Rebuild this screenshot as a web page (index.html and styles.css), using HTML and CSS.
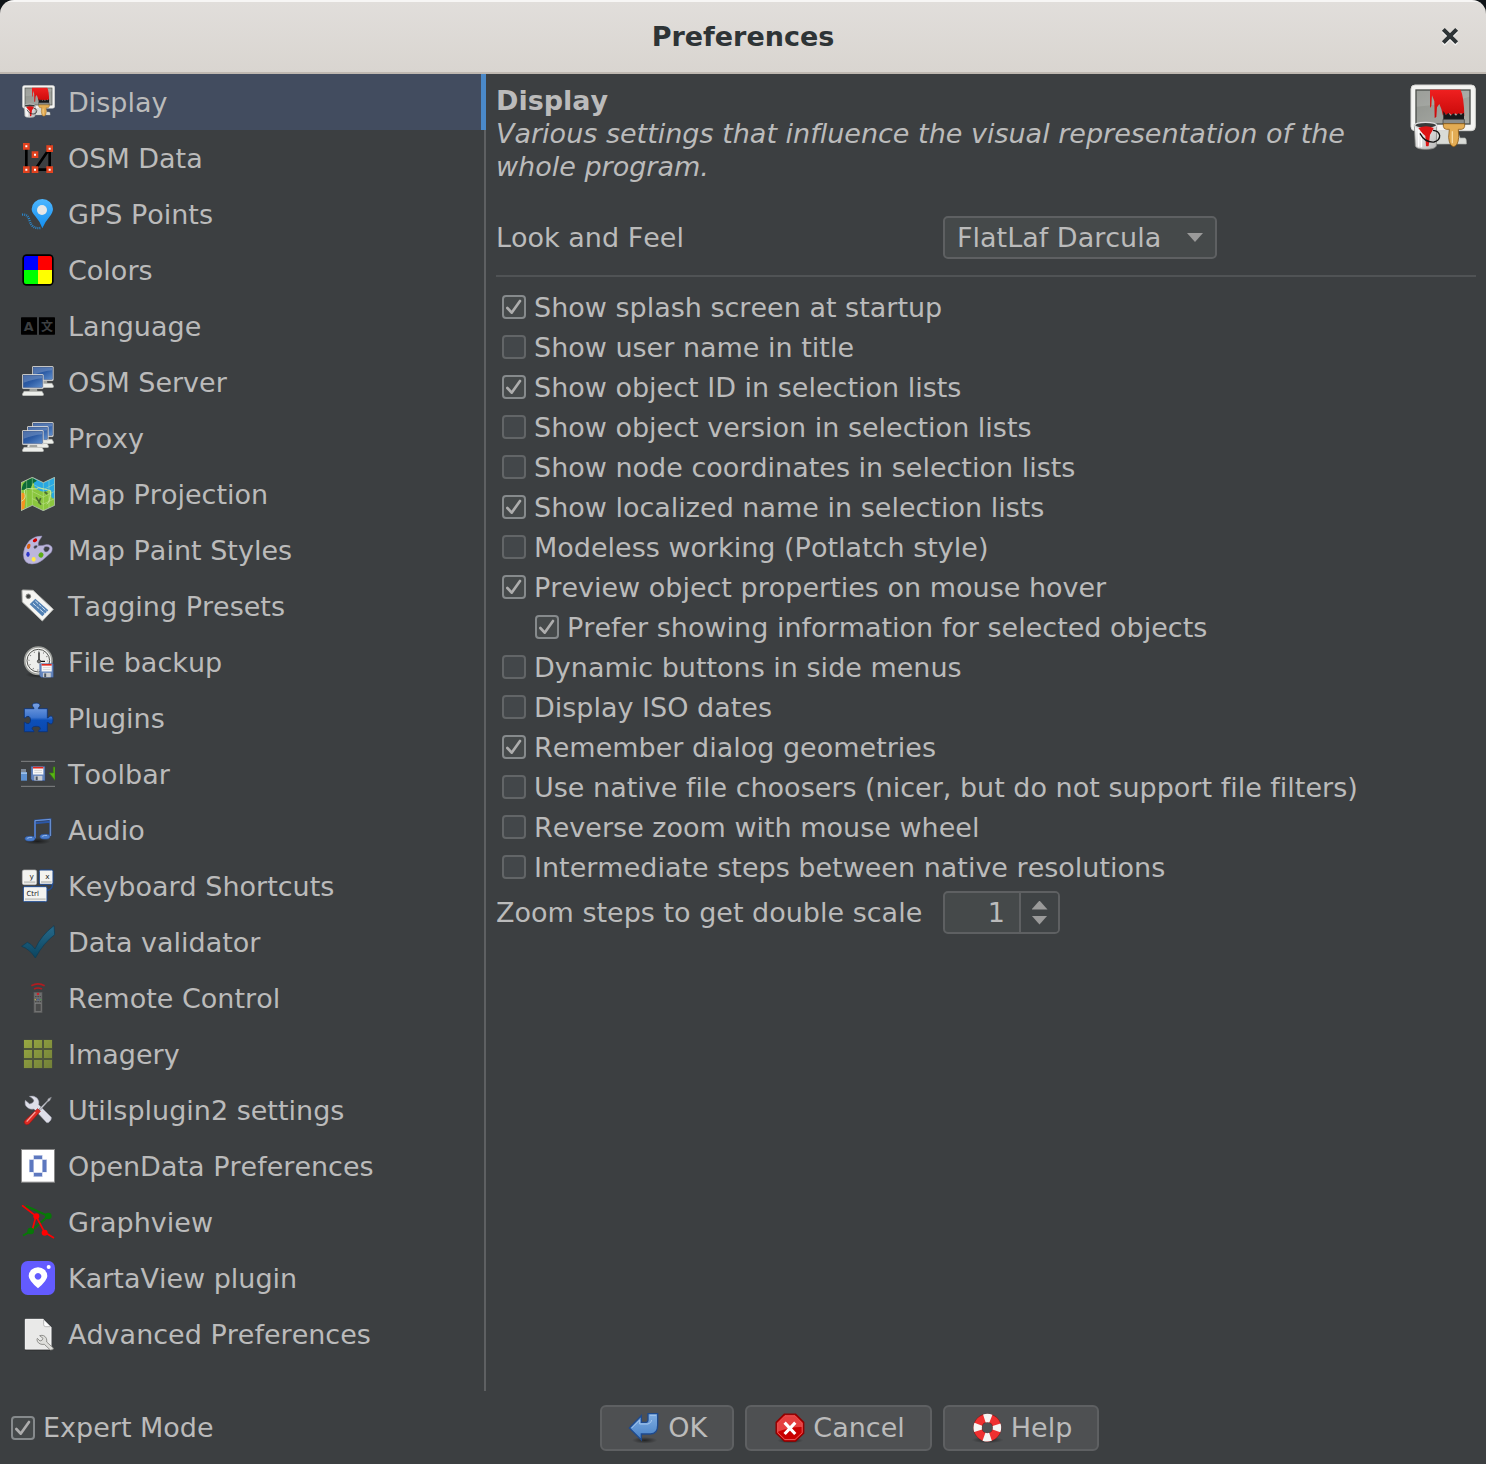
FILE: index.html
```html
<!DOCTYPE html>
<html lang="en">
<head>
<meta charset="utf-8">
<title>Preferences</title>
<link rel="stylesheet" href="styles.css">
</head>
<body>
<svg class="defs" aria-hidden="true">
  <defs>
    <linearGradient id="gScreen" x1="0" y1="0" x2="1" y2="1"><stop offset="0" stop-color="#8e918c"/><stop offset="1" stop-color="#a9aca6"/></linearGradient>
    <linearGradient id="gRed" x1="0" y1="0" x2="0" y2="1"><stop offset="0" stop-color="#ef2020"/><stop offset="1" stop-color="#c80808"/></linearGradient>
    <linearGradient id="gPin" x1="0" y1="0" x2="0" y2="1"><stop offset="0" stop-color="#4db6ff"/><stop offset="1" stop-color="#138ff0"/></linearGradient>
    <linearGradient id="gBlue" x1="0" y1="0" x2="1" y2="1"><stop offset="0" stop-color="#1f4a92"/><stop offset=".5" stop-color="#2d5ca5"/><stop offset="1" stop-color="#5d8dcb"/></linearGradient>
    <linearGradient id="gPuzzle" x1="0" y1="0" x2="0" y2="1"><stop offset="0" stop-color="#7ba2e2"/><stop offset=".5" stop-color="#3c74cd"/><stop offset=".6" stop-color="#0c4fb8"/><stop offset="1" stop-color="#0a49b0"/></linearGradient>
    <linearGradient id="gTick" x1="0" y1="0" x2="0" y2="1"><stop offset="0" stop-color="#27698a"/><stop offset="1" stop-color="#0b4560"/></linearGradient>
    <linearGradient id="gTile" x1="0" y1="0" x2="1" y2="1"><stop offset="0" stop-color="#99a942"/><stop offset="1" stop-color="#717f38"/></linearGradient>
    <linearGradient id="gSteel" x1="0" y1="0" x2="1" y2="1"><stop offset="0" stop-color="#fafafa"/><stop offset="1" stop-color="#b9b9b9"/></linearGradient>
    <linearGradient id="gArrow" x1="0" y1="0" x2="0" y2="1"><stop offset="0" stop-color="#80aee2"/><stop offset="1" stop-color="#4680c6"/></linearGradient>
    <radialGradient id="gShadow"><stop offset="0" stop-color="#000" stop-opacity=".55"/><stop offset="1" stop-color="#000" stop-opacity="0"/></radialGradient>
    <symbol id="icon-display" viewBox="60 252 198 198">
      <ellipse cx="190" cy="424" rx="50" ry="14" fill="url(#gShadow)"/>
      <path d="M140 388h60l10 26h14q6 0 5 18h-90z" fill="#d9dbd7" stroke="#aeb0ac" stroke-width="2"/>
      <rect x="63" y="255" width="193" height="137" rx="12" fill="#f4f4f2" stroke="#d5d5d2" stroke-width="3"/>
      <rect x="78" y="270" width="162" height="102" fill="url(#gScreen)" stroke="#4c4f4b" stroke-width="4"/>
      <path d="M80 320q90-6 158-30v-18H80z" fill="#fff" opacity=".12"/>
      <path d="M120 269h92q10 22 11 80l-10-10-8 8-8-7-9 7-9-7-9 7-6-7-5 7-5-20-6-15-7 10-2 29-5 3-1-50-7-18-2 32-4 6z" fill="url(#gRed)"/>
      <path d="M160 333l8 12 7-6 7 8 8-7 8 7 7-7 8 4 9-6v22h-62z" fill="#17181a"/>
      <path d="M159 358h64v14h-64z" fill="#8a8c8a" stroke="#3a3a3a" stroke-width="2"/>
      <path d="M160 371h64v8q-1 8-9 9h-10l1 24q-2 26-15 28-13-2-15-28l2-24h-9q-8-1-9-9z" fill="#e3ac54" stroke="#8b5a14" stroke-width="2.5"/>
      <path d="M187 394v36" stroke="#f8dca4" stroke-width="4"/>
      <path d="M73 374l3 64q4 10 31 10t32-10l1-64z" fill="url(#gSteel)" stroke="#8d8f8c" stroke-width="2.5"/>
      <path d="M86 390v50M94 396v46" stroke="#fff" stroke-width="5"/>
      <ellipse cx="107" cy="376" rx="33" ry="9" fill="#393b3a" stroke="#ddd" stroke-width="4"/>
      <path d="M85 384q24-10 46 0-4 10-11 20l-4 34q-4 2-8 0l-2-30q-10-8-21-24z" fill="#dd1515"/>
      <path d="M90 400q14 28 42 26 18-4 17-20-3-14-20-15" fill="none" stroke="#151515" stroke-width="4"/>
    </symbol>
    <symbol id="pc" viewBox="0 0 66 66">
      <path d="M23 44h22l1 8H22z" fill="#9fa19d"/>
      <path d="M6 52h54l5 9q0 4-4 4H4q-4-1-3-4z" fill="#eceeea" stroke="#b0b2ae" stroke-width="2"/>
      <rect x="1" y="1" width="63" height="43" rx="3" fill="#f3f3f1" stroke="#c4c5c3" stroke-width="1.5"/>
      <rect x="4" y="4" width="57" height="36" fill="url(#gBlue)" stroke="#1d3f7c" stroke-width="1.5"/>
      <path d="M5 5h55v8q-24 2-55 13z" fill="#fff" opacity=".2"/>
    </symbol>
    <symbol id="floppy" viewBox="0 0 44 44">
      <path d="M1 1h42v42H5l-4-5z" fill="#6485bd" stroke="#3b5b97" stroke-width="2"/>
      <rect x="7" y="2" width="31" height="23" fill="#f7f7f7"/><rect x="7" y="2" width="31" height="5" fill="#e1261c"/>
      <path d="M11 13h23M11 19h23" stroke="#ccc" stroke-width="2"/>
      <rect x="11" y="29" width="24" height="14" fill="#c9ccd0"/><rect x="15" y="31" width="6" height="11" fill="#4a5563"/>
    </symbol>
  </defs>
</svg>
<div class="window">
  <header class="titlebar">
    <h1 class="titlebar-text">Preferences</h1>
    <button class="close" type="button" aria-label="Close"><svg viewBox="0 0 48 48"><path d="M4 9l40 40M44 9L4 49" stroke="#fff" stroke-width="11" opacity=".7"/><path d="M4 4l40 40M44 4L4 44" stroke="#2e3436" stroke-width="12"/></svg></button>
  </header>
  <div class="main">
    <nav class="sidebar" aria-label="Categories">
      <button type="button" class="tab selected"><svg class="icon" viewBox="0 0 34 34"><use href="#icon-display" x="1" y="0" width="33" height="33"/></svg>Display</button>
      <button type="button" class="tab"><svg class="icon" viewBox="63 213 102 102"><path d="M79 230v69M105 299h44v-64L105 299" fill="none" stroke="#000" stroke-width="8"/><g fill="#fff" stroke="#e2421f" stroke-width="7"><path d="M72.500 222.500h13v13h-13zM142.500 229.500h13v13h-13zM98.500 247.500h13v13h-13zM72.500 292.500h13v13h-13zM98.500 292.500h13v13h-13zM142.500 292.500h13v13h-13z"/></g></svg>OSM Data</button>
      <button type="button" class="tab"><svg class="icon" viewBox="63 381 102 102"><path d="M66 434q17-2 22 16t17 23q8 2 16 1" fill="none" stroke="#2b86c9" stroke-width="7" stroke-dasharray="3 3"/><path d="M127 475q-8-22-21-36-11-12-11-22a32 30 0 0 1 64 0q0 11-11 24-12 13-21 34z" fill="url(#gPin)"/><circle cx="126" cy="420" r="15" fill="#e6e6e6"/></svg>GPS Points</button>
      <button type="button" class="tab"><svg class="icon" viewBox="63 549 102 102"><rect x="67" y="553" width="94" height="94" rx="13" fill="#000"/><path d="M72 600v-36q0-6 6-6h36v42z" fill="#00f"/><path d="M114 558h36q6 0 6 6v36h-42z" fill="red"/><path d="M72 600h42v42H78q-6 0-6-6z" fill="#0f0"/><path d="M114 600h42v36q0 6-6 6h-36z" fill="#ff0"/></svg>Colors</button>
      <button type="button" class="tab"><svg class="icon" viewBox="63 27 102 102" aria-hidden="true"><path d="M65 52h46v52H65q-2 0-2-2V54q0-2 2-2zM117 52h46q2 0 2 2v48q0 2-2 2h-46z" fill="#000"/><text class="glyph" x="86" y="93" font-size="38" font-weight="700" fill="#3c3f41">A</text><text class="glyph cjk" x="141" y="92" font-size="36" font-weight="700" fill="#3c3f41">文</text></svg>Language</button>
      <button type="button" class="tab"><svg class="icon" viewBox="63 195 102 102"><use href="#pc" x="96" y="198" width="66" height="66"/><use href="#pc" x="66" y="222" width="66" height="66"/></svg>OSM Server</button>
      <button type="button" class="tab"><svg class="icon" viewBox="63 363 102 102"><use href="#pc" x="96" y="366" width="66" height="66"/><use href="#pc" x="81" y="378" width="66" height="66"/><use href="#pc" x="66" y="390" width="66" height="66"/></svg>Proxy</button>
      <button type="button" class="tab"><svg class="icon" viewBox="63 531 102 102"><path d="M63 548l34-16 33 16 34-16v84l-34 16-33-16-34 16z" fill="#8ac63e"/><path d="M100 534l30 14 34-16v64q-12-2-10-12 4-12-8-13-10 6-24 2-22-8-20-20z" fill="#29a8e2"/><path d="M64 570q4-24 20-31l13-6 14 9-12 8-9 18z" fill="#0b6a38"/><path d="M63 578l12 2 1 22-3 24-10 5z" fill="#f7931e"/><path d="M97 552l33 17 34-17M97 574l33 17 34-17M97 596l33 16 34-16M80 541v82M97 532v84M130 549v83M147 541v83" fill="none" stroke="#d8efb5" stroke-width="1.500" opacity=".75"/><path d="M64 604q16-8 10-24t18-14 20-2 40 8q0 34-12 40" fill="none" stroke="#c8e89c" stroke-width="3"/><path d="M108 592l15 22M122 594l-6 16M134 576l8 6" stroke="#4c6b33" stroke-width="5"/><path d="M63 548l34-16 33 16 34-16v84l-34 16-33-16-34 16z" fill="none" stroke="#b9c4bb" stroke-width="2.500"/></svg>Map Projection</button>
      <button type="button" class="tab"><svg class="icon" viewBox="63 39 102 102"><path fill-rule="evenodd" d="M126 48q-22-1-38 14-18 20-18 42 1 27 26 28 17 0 32-12 14-12 26-23 6-14-1-19-6-5-16-4-10 4-22 3-2-8 3-16 5-6 8-13zM134 80q14-2 15 5-3 12-13 11-9-6-2-16zM104 77q9-3 8 3-2 4-8 6-6-5 0-9z" fill="#bcb6dc" stroke="#8e88b4" stroke-width="1.500"/><g><ellipse cx="105" cy="61" rx="7" ry="5" transform="rotate(-30 105 61)" fill="#cc0000"/><ellipse cx="86" cy="79" rx="5" ry="8" transform="rotate(20 86 79)" fill="#d86010"/><ellipse cx="84" cy="103" rx="5" ry="8" fill="#2b35c8"/><ellipse cx="101" cy="118" rx="6" ry="7" fill="#ffe94a"/><ellipse cx="123" cy="105" rx="7" ry="8" transform="rotate(30 123 105)" fill="#5cab16"/></g></svg>Map Paint Styles</button>
      <button type="button" class="tab"><svg class="icon" viewBox="63 207 102 102"><path d="M66 212q0-2 3-2l30 1 61 57-33 35-60-57z" fill="#f5f5f2" stroke="#b4b5b1" stroke-width="3"/><circle cx="85" cy="229" r="7" fill="#3d3f3e" stroke="#8a8b88" stroke-width="3"/><path d="M106 236l39 35-18 18-38-36z" fill="#5281b4"/><path d="M106 243l34 31M99 250l36 31" stroke="#d9e8f4" stroke-width="3" stroke-dasharray="11 3"/></svg>Tagging Presets</button>
      <button type="button" class="tab"><svg class="icon" viewBox="63 375 102 102"><ellipse cx="116" cy="464" rx="40" ry="10" fill="url(#gShadow)"/><circle cx="115" cy="422" r="41" fill="#f2f2f0" stroke="#9c9e9a" stroke-width="5"/><circle cx="115" cy="422" r="34" fill="#eeeeec" stroke="#555753" stroke-width="3"/><circle cx="115" cy="422" r="28" fill="none" stroke="#555" stroke-width="4" stroke-dasharray="2 12.660"/><path d="M117 397v27h18" fill="none" stroke="#111" stroke-width="4"/><circle cx="117" cy="424" r="5" fill="#777" stroke="#333" stroke-width="2"/><use href="#floppy" x="118" y="430" width="43" height="43"/></svg>File backup</button>
      <button type="button" class="tab"><svg class="icon" viewBox="63 543 102 102"><path d="M73 566h29C102 562 97 560 97 556C97 547 120 547 120 556C120 560 115 562 115 566H142V594C146 594 148 588 153 588C161 588 161 612 153 612C148 612 146 607 142 607V635H116C114 631 121 630 121 625C121 617 96 617 96 625C96 630 103 631 102 635H73V607C77 606 78 611 84 611C94 611 94 589 84 589C78 589 77 595 73 594Z" fill="url(#gPuzzle)" stroke="#0b3278" stroke-width="2.500"/></svg>Plugins</button>
      <button type="button" class="tab"><svg class="icon" viewBox="63 36 102 102"><path d="M63 49h102M63 124h102" stroke="#818484" stroke-width="3"/><path d="M63 72h15v12H63z" fill="#7c8795"/><path d="M63 82h18v25H63z" fill="#5e92d2"/><path d="M63 82h18v5H63z" fill="#9cc1ea"/><use href="#floppy" x="92" y="63" width="44" height="45"/><path d="M165 66h-5v18h-12l17 22z" fill="#59b414" stroke="#38850a" stroke-width="2"/></svg>Toolbar</button>
      <button type="button" class="tab"><svg class="icon" viewBox="63 204 102 102"><ellipse cx="112" cy="289" rx="40" ry="10" fill="url(#gShadow)"/><path d="M105 280v-53l46-4v50M105 235l45-5" fill="none" stroke="#2b57a8" stroke-width="6"/><path d="M105 280v-53l46-4v50" fill="none" stroke="#7fa5e0" stroke-width="2.500"/><g fill="#4a7cc9" stroke="#2b57a8" stroke-width="2"><ellipse cx="90" cy="281" rx="15" ry="7"/><ellipse cx="135" cy="275" rx="15" ry="7"/></g><path d="M82 280q6-4 14-3M127 274q6-4 14-3" stroke="#9fc0ee" stroke-width="3" fill="none"/></svg>Audio</button>
      <button type="button" class="tab"><svg class="icon" viewBox="63 372 102 102" aria-hidden="true"><path d="M158 416q0 20-22 20" fill="none" stroke="#1f4b92" stroke-width="4"/><g fill="#f3f3f0"><rect x="67" y="375" width="43" height="44" rx="5" stroke="#bbb" stroke-width="2"/><rect x="118" y="375" width="41" height="43" rx="4" stroke="#1f4b92" stroke-width="3"/><rect x="70" y="425" width="71" height="45" rx="4" stroke="#1f4b92" stroke-width="3"/></g><path d="M72 412h34M123 411h32M75 463h62" stroke="#c9cac6" stroke-width="6"/><g fill="#222"><text class="glyph" x="95" y="401" font-size="22">y</text><text class="glyph" x="142" y="403" font-size="22">x</text><text class="glyph" x="98" y="454" font-size="21">Ctrl</text></g></svg>Keyboard Shortcuts</button>
      <button type="button" class="tab"><svg class="icon" viewBox="63 540 102 102"><path d="M65 604l17-12q12 4 23 20 19-42 57-70l2 27q-33 24-58 70-16-26-41-35z" fill="url(#gTick)" stroke="#0a3b54" stroke-width="2"/></svg>Data validator</button>
      <button type="button" class="tab"><svg class="icon" viewBox="63 33 102 102"><path d="M94 47q20-11 40 0M102 57q12-6 24 0" fill="none" stroke="#b01c20" stroke-width="5"/><rect x="102" y="67" width="24" height="61" fill="#6e6f6f" stroke="#5a5b5b" stroke-width="2"/><rect x="106" y="101" width="17" height="23" fill="#494a4a" stroke="#909090" stroke-width="1"/><path d="M105 80h18M105 88h18M105 95h18" stroke="#444" stroke-width="3" stroke-dasharray="5 2"/><circle cx="114" cy="72" r="4" fill="#c8232c"/><path d="M104 89h4" stroke="#c9b83a" stroke-width="3"/><path d="M112 89h4" stroke="#3f72d1" stroke-width="3"/><path d="M120 89h4" stroke="#4ba34d" stroke-width="3"/></svg>Remote Control</button>
      <button type="button" class="tab"><svg class="icon" viewBox="63 201 102 102"><path d="M71 209h86v86H71z" fill="#4e553b"/><path d="M72 210h24v24H72zM102 210h24v24h-24zM132 210h24v24h-24zM72 240h24v24H72zM102 240h24v24h-24zM132 240h24v24h-24zM72 270h24v24H72zM102 270h24v24h-24zM132 270h24v24h-24z" fill="url(#gTile)"/></svg>Imagery</button>
      <button type="button" class="tab"><svg class="icon" viewBox="63 369 102 102"><path d="M88 379q13-4 23 5 8 9 5 20l38 38q2 8-9 16-5 2-9-4l-34-37q-18 3-26-12-2-9 0-14l13 11q10-2 13-9 0-6-14-14z" fill="#dddee8" stroke="#9a9bab" stroke-width="1.500"/><path d="M117 417l25-25 3-6 9-4-5 10-6 3-22 26z" fill="#c6c8d0" stroke="#85878d" stroke-width="2"/><path d="M113 416l8 8-34 38q-9 6-14-3-2-5 4-10z" fill="#dd2c25" stroke="#a60f0c" stroke-width="2"/><path d="M80 455l26-29" stroke="#f6a29c" stroke-width="4"/></svg>Utilsplugin2 settings</button>
      <button type="button" class="tab"><svg class="icon" viewBox="63 537 102 102"><rect x="64.500" y="538.500" width="99" height="98" fill="#fff" stroke="#888" stroke-width="3"/><path d="M100 555h28v13h13v39h-13v14h-28v-14H87v-39h13z" fill="#c3cde9"/><path d="M102 557h24v10h-24zM89 570h11v36H89zM128 570h11v36h-11zM102 609h24v10h-24z" fill="#5d78bf"/><path d="M102 569h24v38h-24z" fill="#fff"/></svg>OpenData Preferences</button>
      <button type="button" class="tab"><svg class="icon" viewBox="63 45 102 102"><path d="M78 48l67 30-52 45-24 14" fill="none" stroke="#087808" stroke-width="6"/><path d="M66 46l42 32 26 49 28 17M108 78l-12 45" fill="none" stroke="#f00" stroke-width="5"/><g fill="#f00"><circle cx="109" cy="79" r="9"/><circle cx="134" cy="128" r="9"/></g><g fill="#087808"><circle cx="145" cy="78" r="10"/><circle cx="92" cy="123" r="10"/></g></svg>Graphview</button>
      <button type="button" class="tab"><svg class="icon" viewBox="63 213 102 102"><rect x="63" y="213" width="102" height="102" rx="20" fill="#635bff"/><path fill-rule="evenodd" d="M114 295q-28-24-28-37a28 26 0 0 1 56 0q0 13-28 37zM114 249a10 10 0 1 0 .1 0z" fill="#fff"/><circle cx="146" cy="231" r="6" fill="#fff"/></svg>KartaView plugin</button>
      <button type="button" class="tab"><svg class="icon" viewBox="63 381 102 102"><path d="M76 388h54l23 23v67H76z" fill="#e9e9e8" stroke="#fafafa" stroke-width="3"/><path d="M75 480h78" stroke="#222" stroke-width="2"/><path d="M131 389l21 21h-15q-6 0-6-6z" fill="#fdfdfd" stroke="#9c9c9c" stroke-width="2"/><path d="M119 437q14-4 20 8 2 5 1 11l20 18q2 6-9 6l-18-17q-15 2-21-9-2-6 0-9l8 8q7 0 9-8z" fill="#dededb" stroke="#7f807c" stroke-width="2.500"/></svg>Advanced Preferences</button>
    </nav>
    <main class="content">
      <section class="intro">
        <div class="intro-text"><h2>Display</h2><p>Various settings that influence the visual representation of the whole program.</p></div>
        <svg class="intro-icon"><use href="#icon-display"/></svg>
      </section>
      <form class="form">
        <label for="laf">Look and Feel</label>
        <span class="select"><select id="laf"><option>FlatLaf Darcula</option></select></span>
        <hr>
        <div class="checks">
          <label class="check"><input type="checkbox" checked>Show splash screen at startup</label>
          <label class="check"><input type="checkbox">Show user name in title</label>
          <label class="check"><input type="checkbox" checked>Show object ID in selection lists</label>
          <label class="check"><input type="checkbox">Show object version in selection lists</label>
          <label class="check"><input type="checkbox">Show node coordinates in selection lists</label>
          <label class="check"><input type="checkbox" checked>Show localized name in selection lists</label>
          <label class="check"><input type="checkbox">Modeless working (Potlatch style)</label>
          <label class="check"><input type="checkbox" checked>Preview object properties on mouse hover</label>
          <label class="check nested"><input type="checkbox" checked>Prefer showing information for selected objects</label>
          <label class="check"><input type="checkbox">Dynamic buttons in side menus</label>
          <label class="check"><input type="checkbox">Display ISO dates</label>
          <label class="check"><input type="checkbox" checked>Remember dialog geometries</label>
          <label class="check"><input type="checkbox">Use native file choosers (nicer, but do not support file filters)</label>
          <label class="check"><input type="checkbox">Reverse zoom with mouse wheel</label>
          <label class="check"><input type="checkbox">Intermediate steps between native resolutions</label>
        </div>
        <label for="steps">Zoom steps to get double scale</label>
        <span class="spinner"><input id="steps" type="text" inputmode="numeric" value="1"><span class="arrows"><button type="button" class="up" aria-label="Increase"></button><button type="button" class="down" aria-label="Decrease"></button></span></span>
      </form>
    </main>
  </div>
  <footer class="footer">
    <label class="check"><input type="checkbox" checked>Expert Mode</label>
    <div class="actions">
      <button type="button" class="action"><svg viewBox="0 0 96 96"><ellipse cx="50" cy="85" rx="38" ry="10" fill="url(#gShadow)"/><path d="M4 48l36-37v20h14q6-1 6-8V5h29v35q0 26-22 26H40v18z" fill="url(#gArrow)" stroke="#1f4a8c" stroke-width="4"/><path d="M11 48l24-24v12h25q11-4 11-12M66 10h18" fill="none" stroke="#a4c6ee" stroke-width="3"/></svg>OK</button>
      <button type="button" class="action"><svg viewBox="-5 -3 102 102"><ellipse cx="50" cy="88" rx="42" ry="9" fill="url(#gShadow)"/><path d="M31 4h36l26 26v35L67 90H31L5 65V30z" fill="#c90000" stroke="#8c0000" stroke-width="4"/><path d="M33 10h32l23 23v12Q50 44 10 60V33z" fill="#f05a5a" opacity=".7"/><path d="M33 9h32l23 23v31L65 85H33L10 63V32z" fill="none" stroke="#ea6060" stroke-width="3"/><path d="M32 31l34 36M66 31L32 67" stroke="#fff" stroke-width="10"/></svg>Cancel</button>
      <button type="button" class="action"><svg viewBox="0 0 96 96"><ellipse cx="50" cy="84" rx="48" ry="10" fill="url(#gShadow)"/><circle cx="49" cy="47" r="29" fill="none" stroke="#8f1414" stroke-width="26"/><circle cx="49" cy="47" r="29" fill="none" stroke="#ef3030" stroke-width="23"/><circle cx="49" cy="47" r="29" fill="none" stroke="#f5f5f3" stroke-width="25" stroke-dasharray="20 25.550" stroke-dashoffset="10"/></svg>Help</button>
    </div>
  </footer>
</div>
</body>
</html>
```
FILE: styles.css
```css
* { box-sizing: border-box; }

:root {
  --bg: #3c3f41;
  --fg: #bbbbbb;
  --field: #45494a;
  --line: #5e6062;
}

body {
  margin: 0;
  background: #101418;
  color: var(--fg);
  font: 27px/33px "DejaVu Sans", sans-serif;
  font-kerning: none;
  font-variant-ligatures: none;
}

button, input, select {
  font: inherit;
  font-kerning: inherit;
  font-variant-ligatures: inherit;
  color: inherit;
}
h1, h2, p { margin: 0; font-size: inherit; }

.defs { position: absolute; width: 0; height: 0; }

.window {
  min-height: 100vh;
  display: flex;
  flex-direction: column;
  background: var(--bg);
  border-radius: 14px 14px 0 0;
  overflow: hidden;
}

.titlebar {
  display: grid;
  grid-template-columns: 1fr auto 1fr;
  align-items: center;
  height: 74px;
  padding: 0 28px 2px;
  background: linear-gradient(#e1dedb, #d9d5d0);
  border-top: 2px solid #f7f6f5;
  border-bottom: 2px solid #bfb8b1;
  color: #2e3436;
}
.titlebar-text { grid-column: 2; font-weight: bold; }
.close {
  justify-self: end;
  width: 16px;
  height: 16px;
  padding: 0;
  border: 0;
  background: none;
}
.close svg { display: block; width: 16px; height: 16px; overflow: visible; }

.main { flex: 1; display: flex; }

.sidebar {
  flex: none;
  width: 486px;
  display: flex;
  flex-direction: column;
  border-right: 2px solid var(--line);
}
.tab {
  display: flex;
  align-items: center;
  gap: 13px;
  height: 56px;
  padding: 0 21px;
  border: 0;
  background: none;
  text-align: left;
}
.tab.selected {
  margin-right: -2px;
  background: #424c5f;
  border-right: 5px solid #4a88c7;
}
.icon { flex: none; width: 34px; height: 34px; }
.glyph { font-family: "DejaVu Sans", sans-serif; text-anchor: middle; }
.cjk { font-family: "Noto Sans CJK SC", sans-serif; }

.content { flex: 1; min-width: 0; padding: 10px; }

.intro { display: flex; gap: 10px; min-height: 132px; }
.intro-text { flex: 1; }
.intro-text p { font-style: italic; }
.intro-icon { flex: none; width: 66px; height: 66px; }

.form {
  display: grid;
  grid-template-columns: minmax(434px, max-content) 1fr;
  column-gap: 13px;
  align-items: center;
  justify-items: start;
}
.form hr {
  grid-column: 1 / -1;
  width: 100%;
  margin: 16px 0 10px;
  border: 0;
  border-top: 2px solid #505355;
}

.select { position: relative; }
.select select {
  display: block;
  width: 274px;
  height: 43px;
  padding: 0 12px;
  appearance: none;
  background: var(--field);
  border: 2px solid var(--line);
  border-radius: 5px;
}
.select::after {
  content: "";
  position: absolute;
  right: 14px;
  top: 17px;
  width: 16px;
  height: 9px;
  background: #9a9a9a;
  clip-path: polygon(0 0, 100% 0, 50% 100%);
  pointer-events: none;
}

.checks {
  grid-column: 1 / -1;
  padding: 0 6px;
  margin-bottom: 4px;
}
.check {
  display: flex;
  align-items: center;
  gap: 8px;
  height: 40px;
}
.check.nested { margin-left: 33px; }
.check input {
  flex: none;
  width: 24px;
  height: 24px;
  margin: 0;
  appearance: none;
  border: 2px solid #626567;
  border-radius: 4px;
  background: #43474a;
}
.check input:checked {
  border-color: #868a8c;
  background: var(--field) url("data:image/svg+xml,%3Csvg xmlns='http://www.w3.org/2000/svg' viewBox='0 0 60 60'%3E%3Cpath d='M10 33l13 14L48 12' fill='none' stroke='%23adadad' stroke-width='8' stroke-linecap='round' stroke-linejoin='round'/%3E%3C/svg%3E");
}

.spinner {
  display: flex;
  width: 117px;
  height: 43px;
  border: 2px solid var(--line);
  border-radius: 5px;
  background: var(--field);
  overflow: hidden;
}
.spinner input {
  flex: 1;
  min-width: 0;
  padding: 0 14px;
  border: 0;
  background: none;
  text-align: right;
}
.arrows {
  width: 39px;
  display: flex;
  flex-direction: column;
  align-items: center;
  justify-content: center;
  gap: 6px;
  border-left: 2px solid var(--line);
  background: #3f4345;
}
.arrows button {
  width: 16px;
  height: 9px;
  padding: 0;
  border: 0;
  background: #9a9a9a;
}
.up { clip-path: polygon(50% 0, 100% 100%, 0 100%); }
.down { clip-path: polygon(0 0, 100% 0, 50% 100%); }

.footer {
  display: flex;
  align-items: center;
  height: 73px;
  padding-left: 11px;
}
.actions {
  flex: 1;
  display: flex;
  justify-content: center;
  gap: 11px;
}
.action {
  display: flex;
  align-items: center;
  gap: 8px;
  height: 46px;
  padding: 0 25px 0 26px;
  background: #4e5052;
  border: 2px solid var(--line);
  border-radius: 6px;
}
.action svg { width: 32px; height: 32px; }
```
